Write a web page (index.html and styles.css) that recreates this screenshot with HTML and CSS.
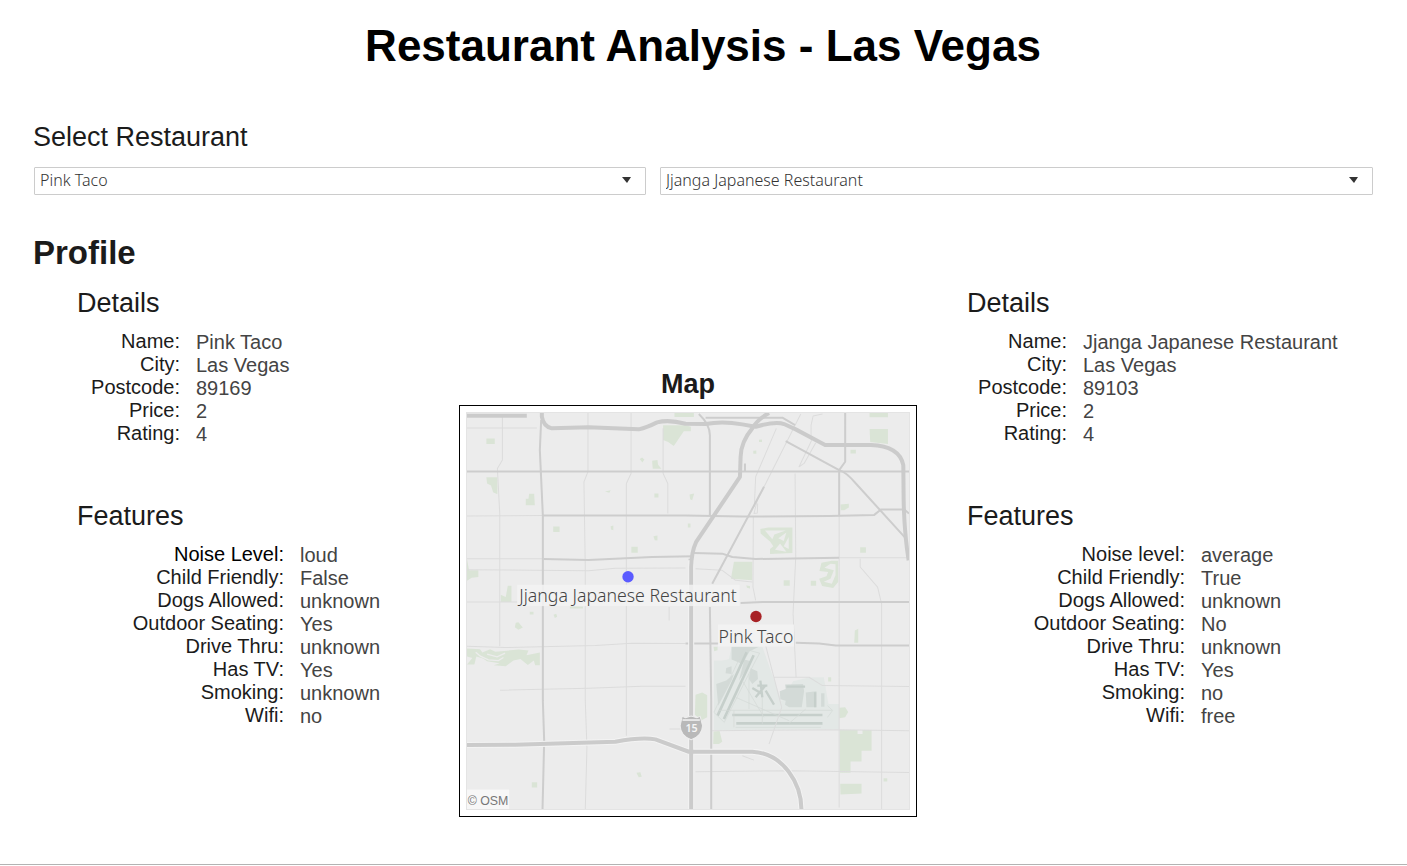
FILE: index.html
```html
<!DOCTYPE html>
<html lang="en">
<head>
<meta charset="utf-8">
<meta name="viewport" content="width=device-width, initial-scale=1">
<title>Restaurant Analysis - Las Vegas</title>
<link rel="stylesheet" href="styles.css">
</head>
<body>
<main class="dashboard">
  <h1 class="title">Restaurant Analysis - Las Vegas</h1>

  <section class="picker">
    <h2 class="heading" id="picker-label">Select Restaurant</h2>
    <div class="picker-row">
      <div class="dropdown">
        <select class="dropdown-select" aria-labelledby="picker-label">
          <option selected>Pink Taco</option>
          <option>Jjanga Japanese Restaurant</option>
        </select>
        <svg class="dropdown-arrow" viewBox="0 0 10 6" aria-hidden="true"><path d="M0 0H9L5 6Z"/></svg>
      </div>
      <div class="dropdown">
        <select class="dropdown-select" aria-labelledby="picker-label">
          <option>Pink Taco</option>
          <option selected>Jjanga Japanese Restaurant</option>
        </select>
        <svg class="dropdown-arrow" viewBox="0 0 10 6" aria-hidden="true"><path d="M0 0H9L5 6Z"/></svg>
      </div>
    </div>
  </section>

  <h2 class="profile-title">Profile</h2>

  <div class="profile">
    <div class="restaurant restaurant-first">
      <section class="details">
        <h3 class="heading">Details</h3>
        <dl class="facts">
          <dt>Name:</dt><dd>Pink Taco</dd>
          <dt>City:</dt><dd>Las Vegas</dd>
          <dt>Postcode:</dt><dd>89169</dd>
          <dt>Price:</dt><dd>2</dd>
          <dt>Rating:</dt><dd>4</dd>
        </dl>
      </section>
      <section class="features">
        <h3 class="heading">Features</h3>
        <dl class="facts">
          <dt class="strong-ink">Noise Level:</dt><dd>loud</dd>
          <dt>Child Friendly:</dt><dd>False</dd>
          <dt>Dogs Allowed:</dt><dd>unknown</dd>
          <dt>Outdoor Seating:</dt><dd>Yes</dd>
          <dt>Drive Thru:</dt><dd>unknown</dd>
          <dt>Has TV:</dt><dd>Yes</dd>
          <dt>Smoking:</dt><dd>unknown</dd>
          <dt>Wifi:</dt><dd>no</dd>
        </dl>
      </section>
    </div>

    <section class="map">
      <h3 class="map-title">Map</h3>
      <div class="map-frame">
        <svg class="map-canvas" viewBox="36 39 1323 1184" role="img" aria-label="Map of Las Vegas with both restaurants">
          <rect class="land" x="36" y="39" width="1323" height="1187"/>

          <g class="park">
            <path d="M94 115H119V132H94ZM657 39H715V51H657ZM623 76H690L706 80V94H685L655 138L638 126L623 120ZM590 182L606 180L608 194L618 206H592ZM553 177L560 172L567 178L561 187ZM94 231H127V282L114 276L108 256L96 250ZM222 281H237L239 315H212V296H220ZM449 274L466 270L462 278ZM597 280H609V292H597ZM294 379H313V395H294ZM466 378L474 376V390L467 388ZM594 408L606 406V421L598 420ZM528 439H547V457H528ZM36 476L42 510H70V530L50 532L36 541ZM158 556H169V605H137V583L152 590ZM344 618H383V624H344Z"/>
            <path d="M690 39H703V51H690ZM702 283L716 280L710 300L704 297ZM697 370H705V382H697ZM893 152L902 151V161H893ZM910 119L919 118V126H910ZM1184 149H1200V160H1184ZM1241 39H1296V52H1241ZM1241 87H1296V132L1243 126ZM1154 313L1179 311V322L1165 330H1155ZM1213 441H1230V457H1213ZM835 484H890V540L826 535ZM984 540H1002V556H984ZM1065 541H1081V556H1065ZM872 555L883 557V564L874 562Z"/>
            <path fill-rule="evenodd" d="M914 386L938 382H1010V458L943 461V446L953 438L943 424L915 400ZM928 391L950 417L956 403L990 391ZM992 397L968 414L984 422ZM999 410L984 438L999 446ZM973 430L958 448L992 454Z"/>
            <path fill-rule="evenodd" d="M1097 487L1128 481H1147V545L1132 563L1099 557L1090 535L1112 528L1117 515L1091 512ZM1124 490L1106 502L1134 510L1124 535L1104 544L1128 550L1139 525V492Z"/>
            <path d="M182 667L190 665L203 681L190 688L179 680ZM224 634H235V642H224ZM295 643L303 640L306 649L299 653ZM36 744L75 746L82 756L105 746L121 754L190 747L220 750L214 764L254 756V794H240L236 780L218 793L196 775L175 780L152 797L116 794L134 788L96 782L84 774L64 768L58 792H36L52 772L36 768Z"/>
            <path class="park-gap" d="M62 755L76 767L100 778L130 780L145 771M96 761L126 769L150 758"/>
            <path d="M230 1144H246V1160H230ZM543 1116L555 1114L559 1128L550 1129ZM720 882L740 876L755 884V950L738 959L718 942ZM774 992L792 991L800 1023L790 1030H773ZM774 739H786V749L776 752ZM1197 690L1207 685V727H1195ZM1117 830H1126V843H1117ZM1150 921L1168 920L1177 934L1168 950L1150 953ZM1152 988H1205V1000H1220V988H1247V1050H1217V1082H1184V1116H1152ZM1153 1149H1217V1178L1154 1181ZM1283 1132H1294V1142H1283Z"/>
          </g>

          <path class="airfield" d="M828 739H920L978 902L1012 842L1060 830H1104L1118 910H1150V985L775 988V780H800L820 776Z"/>
          <g class="terminal">
            <path d="M828 739H910L882 752L860 790L828 777ZM812 802L828 797V820L810 818ZM866 777L886 782L870 810L850 840ZM782 850L812 840L835 820L828 840L788 915ZM885 803L905 812L907 835L890 850L880 835ZM972 872L990 865L988 852L1042 850L1045 872L1038 920H1000L988 912L990 900L974 896ZM1050 876L1082 872V920H1052ZM1096 878H1106V918H1096Z"/>
          </g>
          <g class="runway">
            <path d="M873 755L786 945M894 764L805 955M830 943H1100M842 968H1100"/>
            <path class="runway-short" d="M992 858H1048M890 862L920 880M900 890L928 856M914 840L920 890M905 855H935M930 870L955 912M1078 875V920"/>
          </g>
          <path class="taxiway" d="M865 745L775 935L806 965L900 780L912 758L865 745M790 929H1130L1115 915M840 980H1095M840 890L1000 960M880 820V925M920 890V970M860 840L925 950M1050 925L1000 968M835 930V980M1130 930L1115 950"/>

          <g class="street">
            <path d="M142 50V180L127 205L134 340V737M398 39V215L386 245L390 500V900L395 1040L390 1226M527 39V220L513 250V1005M623 85V220L637 250V340M641 620V660"/>
            <path d="M36 84H245M36 347L263 346M36 475H263M36 508L400 511L480 504L690 503M36 605H190M36 737L150 741L420 735L530 728L690 729M135 869L400 863L560 857H690M642 985H680"/>
            <path d="M1035 42L905 300L895 340L905 338L906 310M962 85L900 230L896 320M1068 120L1030 200L1045 190L1080 128M1100 42L1072 48L1066 75V120M893 350L892 560L900 600M1018 220L1020 470L1012 640L1021 830M1150 345V1220M1277 610V1226M1213 475V500L1265 560L1277 610M1150 472H1359"/>
            <path d="M930 735L978 920L940 1030M955 830H1060L1100 855L1359 858M770 990L1150 987L1359 990M720 1113L1000 1110L1359 1115M720 505L800 510L840 540L890 545M860 1065L895 1078"/>
          </g>
          <g class="avenue">
            <path d="M36 214H1359M258 60L254 150L263 345V900L267 1020L262 1226M263 345L690 346L860 349L1120 347L1255 344L1275 328H1345L1359 340"/>
            <path d="M265 476L400 479L590 470L715 468M715 458L800 460L830 470L900 476L1150 472M730 42Q765 75 763 110V345M750 53H980L1018 75M1168 39V185L1150 210V345M868 190V215"/>
            <path d="M990 123L1150 210Q1170 215 1200 250L1350 415M925 260L770 550M855 608L920 605H1359M690 729H790M1020 727L1090 729L1140 735H1359M763 620L767 900V1226M702 475V560"/>
          </g>
          <g class="highway-edge">
            <path d="M707 480V1226M36 1033L180 1032L480 1023Q560 1008 600 1016L700 1053H890C985 1058 1037 1150 1037 1226"/>
          </g>
          <g class="highway">
            <path d="M36 47H215M260 39V50Q265 80 290 85L400 82L550 88Q575 82 605 67Q640 58 690 71L750 72Q800 62 860 73L900 80Q960 63 985 72L1020 88L1108 135H1245Q1330 138 1342 195L1343 300Q1345 400 1358 480"/>
            <path d="M940 39Q905 58 890 85Q856 125 855 170L853 230L722 425Q708 455 707 500V1226M36 1033L180 1032L480 1023Q560 1008 600 1016L700 1053H890C985 1058 1037 1150 1037 1226"/>
          </g>

          <path class="shield" d="M680 947L690 951L707 946L724 951L734 947L741 975Q740 1005 707 1017Q675 1005 674 975Z"/>
          <path class="shield-bar" d="M681 958H733"/>
          <text class="shield-text" x="708" y="995">15</text>

          <rect class="label-box" x="186" y="553" width="666" height="64"/>
          <rect class="label-box" x="787" y="672" width="228" height="66"/>
          <rect class="credit-box" x="36" y="1166" width="126" height="60"/>
          <circle class="pin-blue" cx="518" cy="529" r="17"/>
          <circle class="pin-red" cx="901" cy="648" r="17"/>
          <text class="label" x="518" y="606">Jjanga Japanese Restaurant</text>
          <text class="label" x="901" y="726">Pink Taco</text>
          <text class="credit" x="38" y="1212">© OSM</text>
        </svg>
      </div>
    </section>

    <div class="restaurant restaurant-second">
      <section class="details">
        <h3 class="heading">Details</h3>
        <dl class="facts">
          <dt>Name:</dt><dd>Jjanga Japanese Restaurant</dd>
          <dt>City:</dt><dd>Las Vegas</dd>
          <dt>Postcode:</dt><dd>89103</dd>
          <dt>Price:</dt><dd>2</dd>
          <dt>Rating:</dt><dd>4</dd>
        </dl>
      </section>
      <section class="features">
        <h3 class="heading">Features</h3>
        <dl class="facts">
          <dt>Noise level:</dt><dd>average</dd>
          <dt>Child Friendly:</dt><dd>True</dd>
          <dt>Dogs Allowed:</dt><dd>unknown</dd>
          <dt>Outdoor Seating:</dt><dd>No</dd>
          <dt>Drive Thru:</dt><dd>unknown</dd>
          <dt>Has TV:</dt><dd>Yes</dd>
          <dt>Smoking:</dt><dd>no</dd>
          <dt>Wifi:</dt><dd>free</dd>
        </dl>
      </section>
    </div>
  </div>
</main>
</body>
</html>
```

FILE: styles.css
```css
* {
  box-sizing: border-box;
}

body {
  margin: 0;
  background: #fff;
  color: #1b1b1b;
  font-family: "Liberation Sans", Arial, sans-serif;
}

h1, h2, h3, dl, dd {
  margin: 0;
}

.dashboard {
  padding: 20px 34px 47px 33px;
  border-bottom: 1px solid #b3b3b3;
}

.title {
  color: #000;
  font-size: 44px;
  line-height: 52px;
  text-align: center;
}

.picker {
  margin-top: 49px;
}

.heading {
  font-size: 27px;
  font-weight: 400;
  line-height: 32px;
}

.picker-row {
  display: grid;
  grid-template-columns: 612fr 713fr;
  gap: 14px;
  margin-top: 14px;
  padding-left: 1px;
}

.dropdown {
  position: relative;
}

.dropdown-select {
  display: block;
  width: 100%;
  height: 28px;
  padding: 0 28px 2px 5px;
  appearance: none;
  border: 1px solid #ccc;
  border-radius: 1px;
  background: #fff;
  color: #333;
  font-family: "Noto Sans", "Open Sans", sans-serif;
  font-size: 16px;
  font-weight: 300;
}

.dropdown-arrow {
  position: absolute;
  top: 10px;
  right: 14px;
  width: 10px;
  height: 6px;
  fill: #333;
  pointer-events: none;
}

.profile-title {
  margin-top: 39px;
  font-size: 33px;
  line-height: 38px;
}

.profile {
  display: grid;
  grid-template-columns: 426fr 458fr 456fr;
  margin-top: 15px;
}

.restaurant-first {
  padding-left: 44px;
}

.restaurant-second {
  padding-left: 50px;
}

.features {
  margin-top: 55px;
}

.facts {
  display: grid;
  grid-auto-rows: 23px;
  column-gap: 16px;
  margin-top: 11px;
  font-size: 20px;
  line-height: 23px;
}

.facts dt {
  text-align: right;
  white-space: nowrap;
}

.facts dd {
  color: #444;
  line-height: 25px;
  white-space: nowrap;
}

.strong-ink {
  color: #000;
}

.restaurant-first .details .facts {
  grid-template-columns: 103px 1fr;
}

.restaurant-first .features .facts {
  grid-template-columns: 207px 1fr;
}

.restaurant-second .details .facts {
  grid-template-columns: 100px 1fr;
}

.restaurant-second .features .facts {
  grid-template-columns: 218px 1fr;
}

.map {
  padding-top: 81px;
}

.map-title {
  font-size: 27px;
  line-height: 32px;
  text-align: center;
}

.map-frame {
  margin-top: 5px;
  padding: 6px;
  border: 1px solid #000;
}

.map-canvas {
  display: block;
  width: 100%;
  border: 1px solid #e4e4e4;
  font-family: "Noto Sans", "Open Sans", sans-serif;
}

.land {
  fill: #ececec;
}

.park {
  fill: #dae4d6;
}

.park-gap {
  fill: none;
  stroke: #ececec;
  stroke-width: 4;
}

.airfield {
  fill: #e3e8e6;
}

.terminal {
  fill: #d3dad7;
}

.runway,
.taxiway,
.street,
.avenue,
.highway,
.highway-edge {
  fill: none;
  stroke-linejoin: round;
}

.runway {
  stroke: #c6cfcb;
  stroke-width: 8;
}

.runway-short {
  stroke-width: 7;
}

.taxiway {
  stroke: #d3dad7;
  stroke-width: 2;
}

.street {
  stroke: #dcdcdc;
  stroke-width: 3;
}

.avenue {
  stroke: #cdcdcd;
  stroke-width: 6;
}

.highway-edge {
  stroke: #f3f3f3;
  stroke-width: 18;
}

.highway {
  stroke: #cbcbcb;
  stroke-width: 12;
}

.shield {
  fill: #b9b9b9;
  stroke: #eee;
  stroke-width: 3;
}

.shield-bar {
  stroke: #eee;
  stroke-width: 5;
}

.shield-text {
  fill: #f5f5f5;
  font-size: 32px;
  font-weight: 600;
  text-anchor: middle;
}

.label-box {
  fill: #f3f3f3;
  fill-opacity: 0.85;
}

.credit-box {
  fill: #f7f7f7;
}

.label {
  fill: #444;
  font-size: 53px;
  font-weight: 300;
  text-anchor: middle;
}

.credit {
  fill: #777;
  font-family: "Liberation Sans", Arial, sans-serif;
  font-size: 37px;
}

.pin-blue {
  fill: #5b5bff;
}

.pin-red {
  fill: #a82226;
}
```
